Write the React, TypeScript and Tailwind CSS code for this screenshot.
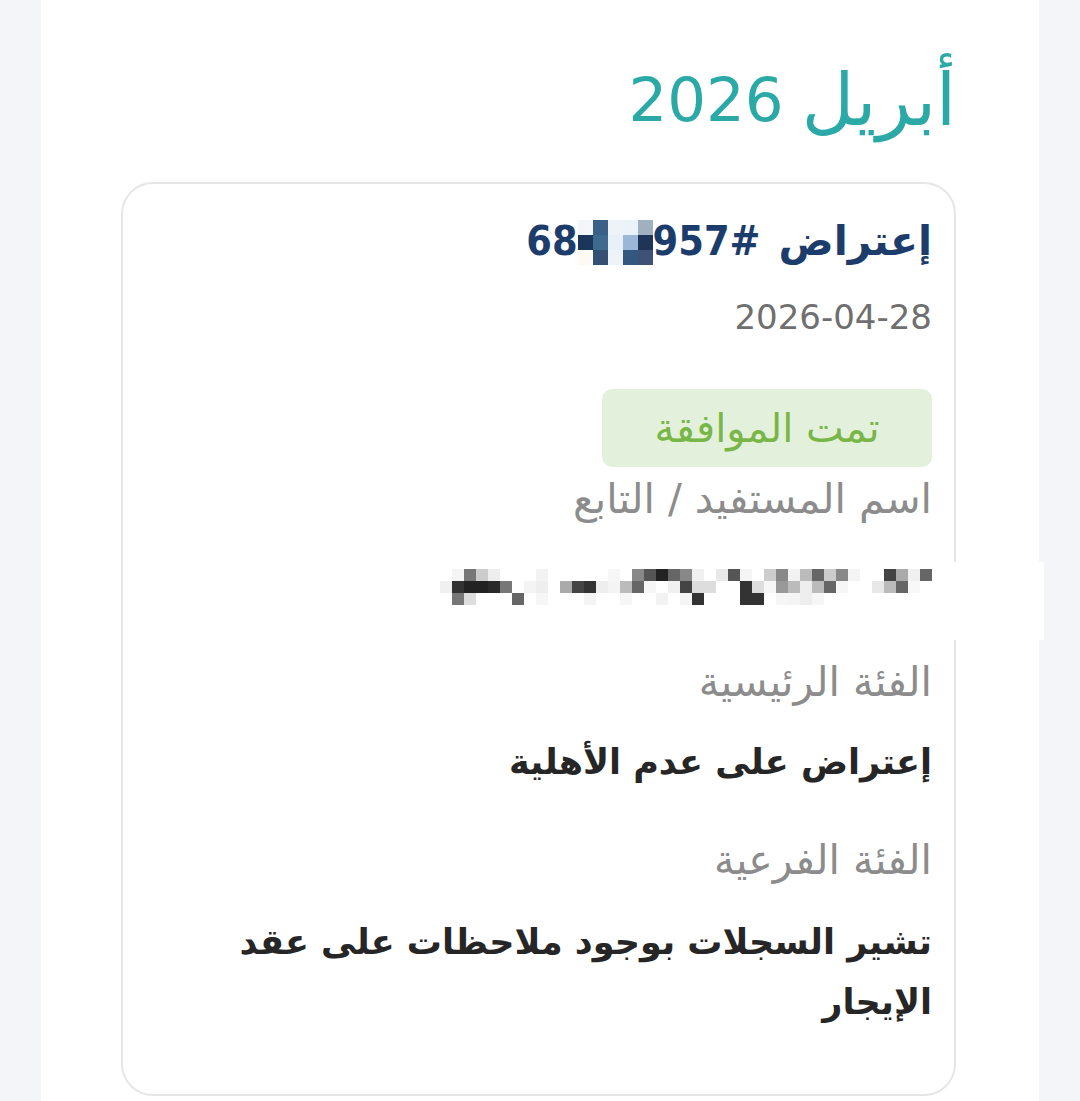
import React from 'react';

const FONT = '"DejaVu Sans", "Noto Sans", sans-serif';
const CONDENSED = '"DejaVu Sans Condensed", "DejaVu Sans", sans-serif';

// mosaic cells used to hide the reference number
const ID_BLOCKS: string[][] = [
  ['#f4f7fa', '#3a6088', '#eef3f8', '#eaf2fa', '#a0b0c0'],
  ['#1c355a', '#3e6a90', '#e8f0f8', '#9cb6d8', '#1e3558'],
  ['#fdfaf4', '#334f72', '#eef3f8', '#33577f', '#3d5274'],
];

// mosaic for the beneficiary name (41 columns of 12px)
const W = '#ffffff';
const NAME_ROWS: string[][] = [
  [W, '#f4f4f4', '#777777', '#cccccc', '#eeeeee', W, W, W, '#f2f2f2', W, W, W, W, W, '#f6f6f6', W, '#888888', '#555555', '#222222', '#666666', '#888888', '#f0f0f0', W, '#e8e8e8', '#555555', '#f4f4f4', W, '#cccccc', '#888888', '#f2f2f2', '#bbbbbb', '#666666', '#cccccc', '#888888', '#f5f5f5', W, W, '#444444', '#aaaaaa', '#f0f0f0', '#666666'],
  ['#f0f0f0', '#333333', '#222222', '#222222', '#2a2a2a', '#777777', W, '#f4f4f4', '#eeeeee', W, '#aaaaaa', '#444444', '#333333', '#eeeeee', '#f4f4f4', '#bbbbbb', '#666666', '#f6f6f6', W, '#f0f0f0', '#444444', '#dddddd', '#dddddd', W, W, '#333333', '#dddddd', '#f6f6f6', '#999999', '#bbbbbb', '#eeeeee', '#bbbbbb', '#666666', '#f6f6f6', W, W, '#e8e8e8', '#bbbbbb', '#666666', '#f8f8f8', W],
  [W, '#777777', '#dddddd', W, W, W, '#666666', W, '#f6f6f6', W, W, W, '#f4f4f4', W, W, '#f6f6f6', W, W, '#f2f2f2', W, '#f5f5f5', '#333333', W, W, W, '#333333', '#333333', W, '#f6f6f6', '#f4f4f4', '#eeeeee', '#f6f6f6', W, W, W, W, W, W, W, W, W],
];

const Mosaic: React.FC<{ rows: string[][]; size: number }> = ({ rows, size }) => (
  <span className="inline-flex flex-col align-middle" dir="ltr">
    {rows.map((row, i) => (
      <span key={i} className="flex">
        {row.map((c, j) => (
          <span key={j} className="block shrink-0" style={{ width: size, height: size, backgroundColor: c }} />
        ))}
      </span>
    ))}
  </span>
);

const Field: React.FC<{ label: string; children: React.ReactNode; labelClass: string; valueClass: string }> = ({
  label,
  children,
  labelClass,
  valueClass,
}) => (
  <>
    <p className={`text-[41px] leading-[44px] text-[#8c8c8c] ${labelClass}`}>{label}</p>
    <div className={`text-[35px] font-bold text-[#262626] ${valueClass}`}>{children}</div>
  </>
);

export default function App() {
  return (
    <div className="min-h-screen bg-[#f3f5f9]" style={{ fontFamily: FONT }}>
      <div dir="rtl" className="mx-auto w-[998px] min-h-screen bg-white pt-[60px] pr-[83px] pl-[80px] pb-[40px]">
        <h1 className="flex h-[80px] items-center gap-[18px] text-[#2aa9a6]">
          <span className="text-[72px] leading-[80px]">أبريل</span>
          <span className="text-[61px] leading-[80px]">2026</span>
        </h1>

        <div className="relative mt-[42px] rounded-[32px] border-2 border-[#e6e6e6] bg-white pt-[30px] pr-[22px] pl-[60px] pb-[62px]">
          <div className="flex h-[56px] items-center font-bold text-[#1c3d6b]">
            <span className="text-[41px]">إعتراض</span>
            <span className="w-[18px]" />
            <span dir="ltr" className="flex items-center text-[41px]" style={{ fontFamily: CONDENSED }}>
              68
              <Mosaic rows={ID_BLOCKS} size={15} />
              957#
            </span>
          </div>

          <p className="mt-[25px] text-[34px] leading-[44px] text-[#6f6f6f]">2026-04-28</p>

          <div className="mt-[50px] flex h-[78px] w-[330px] items-center justify-center rounded-[10px] bg-[#e3f1dc] text-[40px] text-[#79b648]">
            تمت الموافقة
          </div>

          <Field label="اسم المستفيد / التابع" labelClass="mt-[10px]" valueClass="relative mt-[41px] h-[50px]">
            <div className="absolute top-0 -right-[112px] w-[600px] h-[78px] bg-white" />
            <div className="relative flex h-[50px] items-center justify-start">
              <Mosaic rows={NAME_ROWS} size={12} />
            </div>
          </Field>

          <Field label="الفئة الرئيسية" labelClass="mt-[48px]" valueClass="mt-[33px] leading-[50px]">
            إعتراض على عدم الأهلية
          </Field>

          <Field label="الفئة الفرعية" labelClass="mt-[51px]" valueClass="mt-[30px] leading-[60px]">
            تشير السجلات بوجود ملاحظات على عقد الإيجار
          </Field>
        </div>
      </div>
    </div>
  );
}
